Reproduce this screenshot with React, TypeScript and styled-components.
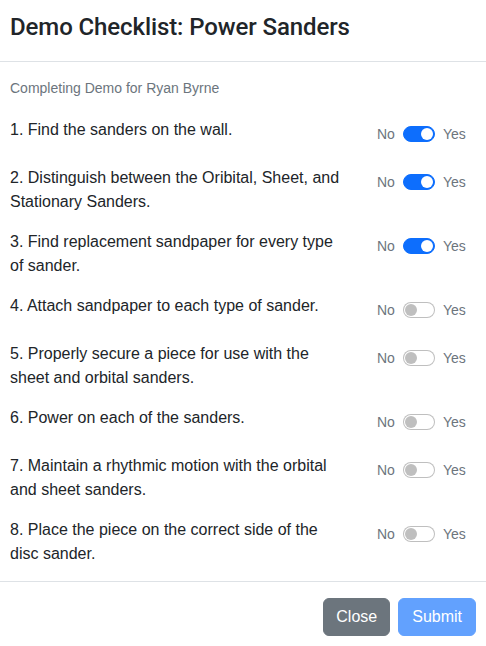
import React from 'react';
import styled, {createGlobalStyle, css} from 'styled-components';

const GlobalStyle = createGlobalStyle`
    html, body {
        margin: 0;
        padding: 0;
        background: #ffffff;
    }
    body {
        font-family: "Liberation Sans", Arial, sans-serif;
        color: #212529;
    }
`

const Modal = styled.div`
    width: 486px;
    background: #ffffff;
`

const Header = styled.div`
    padding: 13px 10px 19px;
    border-bottom: 1px solid #dee2e6;
`

const Title = styled.h5`
    margin: 0;
    font-family: Roboto, "Liberation Sans", sans-serif;
    font-weight: 500;
    font-size: 24px;
    line-height: 29px;
    letter-spacing: -0.1px;
    color: #212529;
`

const Body = styled.div`
    padding: 16px 10px 15px;
`

const Muted = styled.p`
    margin: 0 0 17px;
    font-size: 14px;
    line-height: 21px;
    color: #6c757d;
`

const List = styled.div`
    display: flex;
    flex-direction: column;
    gap: 14px;
`

const Row = styled.div`
    display: grid;
    grid-template-columns: 334px auto;
    column-gap: 33px;
    align-items: start;
    min-height: 34px;
`

const Text = styled.div`
    padding-top: 2px;
    font-size: 16px;
    line-height: 24px;
`

const Toggle = styled.div`
    display: flex;
    align-items: center;
    gap: 8px;
    padding-top: 10px;
`

const Label = styled.span`
    font-size: 14px;
    line-height: 16px;
    color: #6c757d;
`

const Switch = styled.span`
    position: relative;
    display: inline-block;
    box-sizing: border-box;
    width: 32px;
    height: 16px;
    border-radius: 8px;
    border: 1px solid rgba(0, 0, 0, 0.25);
    background: #ffffff;

    &::after {
        content: '';
        position: absolute;
        top: 1px;
        left: 1px;
        width: 12px;
        height: 12px;
        border-radius: 50%;
        background: #bfbfbf;
    }

    ${props => props.on && css`
        border-color: #0d6efd;
        background: #0d6efd;

        &::after {
            left: 17px;
            background: #ffffff;
        }
    `}
`

const Footer = styled.div`
    display: flex;
    justify-content: flex-end;
    gap: 8px;
    padding: 16px 10px;
    border-top: 1px solid #dee2e6;
`

const Button = styled.button`
    font-family: "Liberation Sans", Arial, sans-serif;
    font-size: 16px;
    line-height: 24px;
    padding: 6px 12px;
    border-radius: 6px;
    border: 1px solid #6c757d;
    background: #6c757d;
    color: #ffffff;

    ${props => props.primary && css`
        padding: 6px 13px;
        border-color: #62a1fe;
        background: #62a1fe;
    `}
`

const items = [
    {text: '1. Find the sanders on the wall.', done: true},
    {text: '2. Distinguish between the Oribital, Sheet, and Stationary Sanders.', done: true},
    {text: '3. Find replacement sandpaper for every type of sander.', done: true},
    {text: '4. Attach sandpaper to each type of sander.', done: false},
    {text: '5. Properly secure a piece for use with the sheet and orbital sanders.', done: false},
    {text: '6. Power on each of the sanders.', done: false},
    {text: '7. Maintain a rhythmic motion with the orbital and sheet sanders.', done: false},
    {text: '8. Place the piece on the correct side of the disc sander.', done: false},
]

const App = () => {

    return (
        <>
            <GlobalStyle/>
            <Modal>
                <Header>
                    <Title>Demo Checklist: Power Sanders</Title>
                </Header>
                <Body>
                    <Muted>Completing Demo for Ryan Byrne</Muted>
                    <List>
                        {
                            items.map(item =>
                                <Row key={item.text}>
                                    <Text>{item.text}</Text>
                                    <Toggle>
                                        <Label>No</Label>
                                        <Switch on={item.done}/>
                                        <Label>Yes</Label>
                                    </Toggle>
                                </Row>
                            )
                        }
                    </List>
                </Body>
                <Footer>
                    <Button>Close</Button>
                    <Button primary>Submit</Button>
                </Footer>
            </Modal>
        </>
    )
}

export default App;
